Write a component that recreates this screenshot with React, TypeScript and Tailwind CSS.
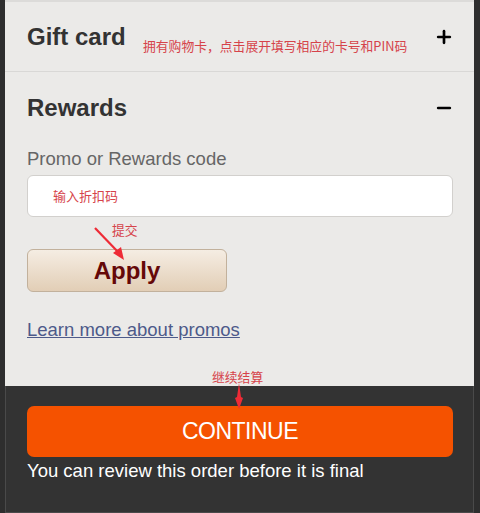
import { Plus, Minus } from "lucide-react";

const font = { fontFamily: '"Liberation Sans", Arial, "Noto Sans CJK SC", sans-serif' };

function Note({ text, className }: { text: string; className: string }) {
  return (
    <span
      className={`absolute text-[12.8px] leading-none text-[#d6434a] whitespace-nowrap ${className}`}
      style={{ fontFamily: '"Noto Sans CJK SC", sans-serif' }}
    >
      {text}
    </span>
  );
}

export default function App() {
  return (
    <div className="w-[480px] h-[513px] bg-[#2e2e2e] pl-[5px] pr-[6px] overflow-hidden" style={font}>
      <div className="relative bg-[#ebeae8] border-t-2 border-[#dcdbd9]">
        {/* Gift card */}
        <div className="h-[70px] flex items-center justify-between pl-[22px] pr-[20px] border-b border-[#d9d8d6]">
          <h2 className="text-[24px] font-bold text-[#333]">Gift card</h2>
          <Plus size={20} strokeWidth={3.2} className="text-black" />
        </div>
        <Note text="拥有购物卡，点击展开填写相应的卡号和PIN码" className="left-[138px] top-[38px]" />

        {/* Rewards */}
        <div className="h-[72px] flex items-center justify-between pl-[22px] pr-[20px]">
          <h2 className="text-[24px] font-bold text-[#333]">Rewards</h2>
          <Minus size={20} strokeWidth={3.2} className="text-black" />
        </div>

        <div className="pl-[22px] pr-[21px] pt-[4px] pb-[46px]">
          <label className="block text-[18.5px] leading-[21px] text-[#666]">Promo or Rewards code</label>
          <div className="mt-[6px] h-[42px] bg-white border border-[#d2d0cd] rounded-[6px] flex items-center pl-[25px]">
            <span
              className="text-[13px] text-[#d6434a]"
              style={{ fontFamily: '"Noto Sans CJK SC", sans-serif' }}
            >
              输入折扣码
            </span>
          </div>
          <button className="mt-[32px] w-[200px] h-[43px] rounded-[6px] border border-[#c2b19c] bg-gradient-to-b from-[#f5ede3] to-[#e2ceb6] text-[24px] font-bold text-[#650808]">
            Apply
          </button>
          <a href="#" className="block mt-[27px] text-[18.5px] leading-[21px] text-[#4d5a8a] underline">
            Learn more about promos
          </a>
        </div>

        {/* annotations */}
        <Note text="提交" className="left-[107px] top-[222px]" />
        <svg className="absolute left-[88px] top-[224px]" width="40" height="40" viewBox="0 0 40 40">
          <line x1="2" y1="2" x2="26" y2="27" stroke="#ee2b36" strokeWidth="2.2" />
          <polygon points="31,34 20,27 28,21" fill="#ee2b36" />
        </svg>
        <Note text="继续结算" className="left-[207px] top-[369px]" />
      </div>

      <div className="relative h-[127px] bg-[#333] border-b border-l border-r border-[#4a4a4a] pl-[21px] pr-[20px] pt-[20px]">
        <svg className="absolute left-[227px] top-[-3px]" width="12" height="26" viewBox="0 0 12 26">
          <polygon points="6,0 8,14 10,15 6,26 2,15 4,14" fill="#ee2b36" />
        </svg>
        <button className="w-full h-[51px] rounded-[7px] bg-[#f55200] text-white text-[23px] tracking-[-0.5px]">
          CONTINUE
        </button>
        <p className="mt-[3px] text-[18.5px] leading-[21px] text-white">You can review this order before it is final</p>
      </div>
    </div>
  );
}
